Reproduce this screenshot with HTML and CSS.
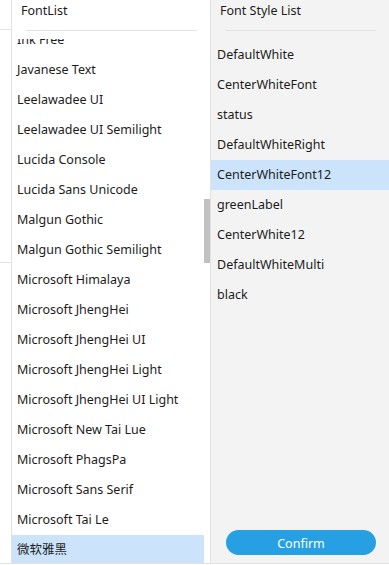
FILE: index.html
```html
<!DOCTYPE html>
<html lang="en">
<head>
    <meta charset="UTF-8">
    <title>Font Picker</title>
    <link rel="stylesheet" href="styles.css">
</head>
<body>
    <div class="dialog">
        <div class="edge">
            <div class="edge-top"></div>
            <div class="edge-mid"></div>
        </div>

        <!-- Font family list -->
        <div class="panel font-panel">
            <div class="panel-title">FontList</div>
            <div class="divider"></div>
            <div class="list-view">
                <ul class="list font-list">
                    <li>Ink Free</li>
                    <li>Javanese Text</li>
                    <li>Leelawadee UI</li>
                    <li>Leelawadee UI Semilight</li>
                    <li>Lucida Console</li>
                    <li>Lucida Sans Unicode</li>
                    <li>Malgun Gothic</li>
                    <li>Malgun Gothic Semilight</li>
                    <li>Microsoft Himalaya</li>
                    <li>Microsoft JhengHei</li>
                    <li>Microsoft JhengHei UI</li>
                    <li>Microsoft JhengHei Light</li>
                    <li>Microsoft JhengHei UI Light</li>
                    <li>Microsoft New Tai Lue</li>
                    <li>Microsoft PhagsPa</li>
                    <li>Microsoft Sans Serif</li>
                    <li>Microsoft Tai Le</li>
                    <li class="selected">微软雅黑</li>
                </ul>
            </div>
            <div class="scroll-thumb"></div>
        </div>

        <!-- Font style list -->
        <div class="panel style-panel">
            <div class="panel-title">Font Style List</div>
            <div class="divider"></div>
            <ul class="list style-list">
                <li>DefaultWhite</li>
                <li>CenterWhiteFont</li>
                <li>status</li>
                <li>DefaultWhiteRight</li>
                <li class="selected">CenterWhiteFont12</li>
                <li>greenLabel</li>
                <li>CenterWhite12</li>
                <li>DefaultWhiteMulti</li>
                <li>black</li>
            </ul>
            <button class="confirm">Confirm</button>
        </div>
    </div>
</body>
</html>
```

FILE: styles.css
```css
body {
    margin: 0;
    background: #fff;
    font-family: "Noto Sans", "Noto Sans CJK SC", sans-serif;
    font-size: 12.5px;
    color: #1c1c1c;
    overflow: hidden;
}
.dialog {
    display: flex;
    width: 389px;
    height: 563px;
    border-bottom: 1px solid #e2e2e2;
}
.edge {
    width: 11px;
    border-right: 1px solid #e2e2e2;
    background: #fff;
}
.edge-top {
    height: 29px;
    border-bottom: 1px solid #e2e2e2;
}
.edge-mid {
    height: 232px;
    border-bottom: 1px solid #e2e2e2;
}
.panel {
    display: flex;
    flex-direction: column;
    position: relative;
}
.font-panel {
    width: 198px;
    background: #fff;
    border-right: 1px solid #e2e2e2;
}
.style-panel {
    flex: 1;
    background: #f3f3f3;
}
.panel-title {
    height: 30px;
    line-height: 22px;
    padding-left: 9px;
}
.font-panel .divider {
    height: 1px;
    background: #e2e2e2;
    margin: 0 13px 0 14px;
}
.style-panel .divider {
    height: 1px;
    background: #e2e2e2;
    margin: 0 13px 0 15px;
}
.list {
    list-style: none;
    margin: 0;
    padding: 0;
}
.list li {
    height: 30px;
    line-height: 30px;
    white-space: nowrap;
}
.list-view {
    flex: 1;
    overflow: hidden;
    margin-top: 8px;
}
.font-list {
    margin-top: -14px;
}
.font-list li {
    padding-left: 5px;
    margin-right: 6px;
}
.style-list {
    margin-top: 9px;
    flex: 1;
}
.style-list li {
    padding-left: 6px;
}
.list li.selected {
    background: #cce4fb;
}
.scroll-thumb {
    position: absolute;
    right: 0;
    top: 199px;
    width: 6px;
    height: 64px;
    background: #c1c1c1;
}
.confirm {
    margin: 0 13px 8px 15px;
    height: 25px;
    padding: 1px 0 0;
    border: none;
    border-radius: 13px;
    background: #26a0e2;
    color: #fff;
    font-family: "Noto Sans", sans-serif;
    font-size: 12.5px;
    cursor: pointer;
}
```
